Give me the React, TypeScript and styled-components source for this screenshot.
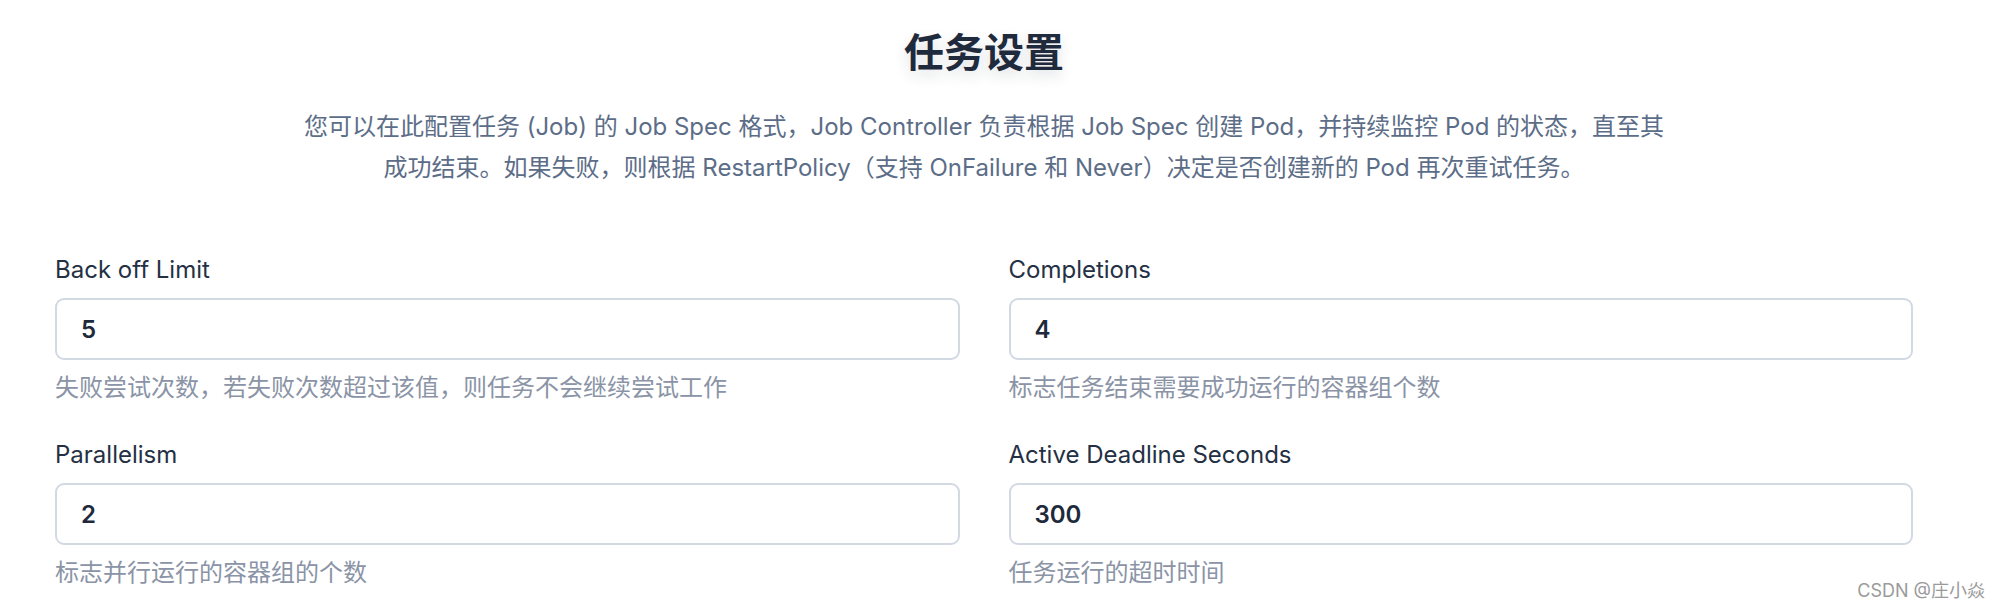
import React from 'react'
import styled, { createGlobalStyle } from 'styled-components'

const GlobalStyle = createGlobalStyle`
  html, body {
    margin: 0;
    padding: 0;
    background: #ffffff;
    font-family: Inter, "Noto Sans CJK SC", sans-serif;
  }
`

interface Field {
  label: string
  value: string
  help: string
}

const fields: Field[] = [
  { label: 'Back off Limit', value: '5', help: '失败尝试次数，若失败次数超过该值，则任务不会继续尝试工作' },
  { label: 'Completions', value: '4', help: '标志任务结束需要成功运行的容器组个数' },
  { label: 'Parallelism', value: '2', help: '标志并行运行的容器组的个数' },
  { label: 'Active Deadline Seconds', value: '300', help: '任务运行的超时时间' },
]

const Page = styled.div`
  position: relative;
  width: 2000px;
  height: 608px;
  overflow: hidden;
  padding-top: 27px;
  box-sizing: border-box;
`

const Header = styled.header`
  width: 1858px;
  margin-left: 55px;
  display: flex;
  flex-direction: column;
  align-items: center;
`

const Title = styled.h1`
  margin: 0;
  font-size: 40px;
  line-height: 52px;
  font-weight: 700;
  color: #1f2a3c;
  text-shadow: 0 6px 14px rgba(30, 42, 60, 0.14);
`

const Intro = styled.p`
  margin: 27px 0 0;
  font-size: 24px;
  line-height: 41px;
  color: #5c6d88;
  text-align: center;
  white-space: nowrap;
`

const FormGrid = styled.div`
  width: 1858px;
  margin: 65px 0 0 55px;
  display: grid;
  grid-template-columns: 1fr 1fr;
  column-gap: 49px;
  row-gap: 33px;
`

const FieldBox = styled.div`
  display: flex;
  flex-direction: column;
`

const Label = styled.label`
  font-size: 24px;
  line-height: 34px;
  color: #243044;
`

const Input = styled.input`
  margin-top: 11px;
  height: 62px;
  box-sizing: border-box;
  border: 2px solid #d3d9e2;
  border-radius: 9px;
  padding: 0 24px;
  font-family: Inter, "Noto Sans CJK SC", sans-serif;
  font-size: 24px;
  font-weight: 600;
  color: #1e293b;
  background: #fff;
  outline: none;
`

const Help = styled.div`
  margin-top: 11px;
  font-size: 24px;
  line-height: 34px;
  color: #8a94a6;
`

const Watermark = styled.div`
  position: absolute;
  right: 15px;
  bottom: 6px;
  font-size: 18px;
  color: #9a9a9a;
`

const App: React.FC = () => {
  return (
    <Page>
      <GlobalStyle />
      <Header>
        <Title>任务设置</Title>
        <Intro>
          您可以在此配置任务 (Job) 的 Job Spec 格式，Job Controller 负责根据 Job Spec 创建 Pod，并持续监控 Pod 的状态，直至其
          <br />
          成功结束。如果失败，则根据 RestartPolicy（支持 OnFailure 和 Never）决定是否创建新的 Pod 再次重试任务。
        </Intro>
      </Header>
      <FormGrid>
        {fields.map((f, idx) => (
          <FieldBox key={idx}>
            <Label>{f.label}</Label>
            <Input defaultValue={f.value} readOnly />
            <Help>{f.help}</Help>
          </FieldBox>
        ))}
      </FormGrid>
      <Watermark>CSDN @庄小焱</Watermark>
    </Page>
  )
}

export default App
